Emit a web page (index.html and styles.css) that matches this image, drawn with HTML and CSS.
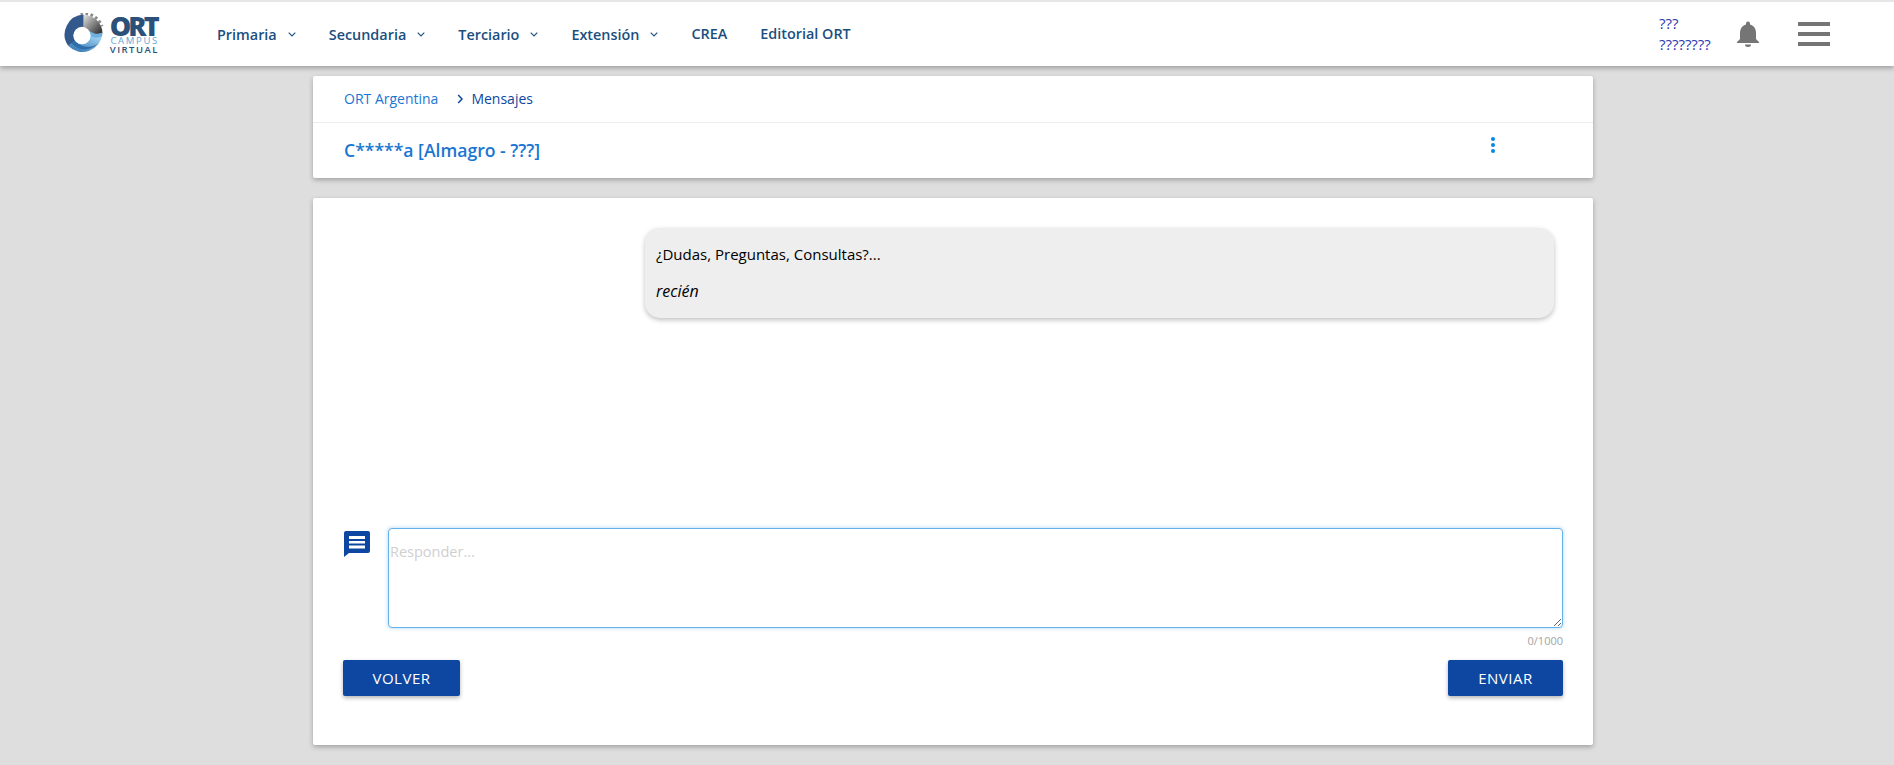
FILE: index.html
```html
<!DOCTYPE html>
<html lang="es">
<head>
  <meta charset="UTF-8" />
  <title>Mensajes - ORT Campus Virtual</title>
  <link rel="stylesheet" href="styles.css">
</head>
<body>

<header class="topbar">
  <a class="logo" href="#">
    <svg class="logo-mark" width="42" height="42" viewBox="0 1 41 41">
      <defs>
        <linearGradient id="ringGrey" x1="0.1" y1="0" x2="0.9" y2="0.8">
          <stop offset="0" stop-color="#d8d8d8"/>
          <stop offset="1" stop-color="#3a3a3a"/>
        </linearGradient>
        <linearGradient id="ringBlue" x1="0.8" y1="0.2" x2="0.2" y2="1">
          <stop offset="0" stop-color="#9accee"/>
          <stop offset="1" stop-color="#3478b4"/>
        </linearGradient>
      </defs>
      <!-- gear teeth on the upper right -->
      <path d="M18 1.500 A19.500 19.500 0 0 1 39 14" fill="none" stroke="#8a8a8a" stroke-width="3" stroke-dasharray="2.500 2.500"/>
      <path d="M21 3 A18 18 0 0 1 39.500 21 L21 23 Z" fill="url(#ringGrey)"/>
      <path d="M39.500 21 A19.500 19.500 0 0 1 6 33 L20 23 Z" fill="url(#ringBlue)"/>
      <path d="M6 33 A19.500 19.500 0 0 1 21 2.500 L21 23 Z" fill="#33598c"/>
      <path d="M9 30 C15 38 27 39 35 31 C28 36 18 35 13 27 Z" fill="#2f6ea8"/>
      <path d="M26 18 C32 22 36 22 39.500 20 L39 24 C34 26 30 25 26 23 Z" fill="#6fb0de"/>
      <circle cx="19.500" cy="23" r="8.500" fill="#fff"/>
    </svg>
    <span class="logo-text">
      <span class="logo-ort">ORT</span>
      <span class="logo-campus">CAMPUS</span>
      <span class="logo-virtual">VIRTUAL</span>
    </span>
  </a>

  <nav class="mainnav">
    <a href="#">Primaria <svg class="chev" width="8" height="5" viewBox="0 0 8 5"><path d="M.7.7 4 4 7.3.7" fill="none" stroke="#1b4f80" stroke-width="1.1"/></svg></a>
    <a href="#">Secundaria <svg class="chev" width="8" height="5" viewBox="0 0 8 5"><path d="M.7.7 4 4 7.3.7" fill="none" stroke="#1b4f80" stroke-width="1.1"/></svg></a>
    <a href="#">Terciario <svg class="chev" width="8" height="5" viewBox="0 0 8 5"><path d="M.7.7 4 4 7.3.7" fill="none" stroke="#1b4f80" stroke-width="1.1"/></svg></a>
    <a href="#">Extensión <svg class="chev" width="8" height="5" viewBox="0 0 8 5"><path d="M.7.7 4 4 7.3.7" fill="none" stroke="#1b4f80" stroke-width="1.1"/></svg></a>
    <a class="plain" href="#">CREA</a>
    <a class="plain" href="#">Editorial ORT</a>
  </nav>

  <div class="userbox">
    <a class="username" href="#">???<br>????????</a>
    <svg class="bell" width="24" height="26" viewBox="0 0 24 26">
      <path d="M12 0.5a2 2 0 0 1 2 2v1C18 4.500 20 8 20 12v6l3 3v1H1v-1l3-3v-6c0-4 2-7.500 6-8.500v-1a2 2 0 0 1 2-2zM9 23.500h6a3 2.500 0 0 1-6 0z" fill="#757575"/>
    </svg>
    <div class="burger"><span></span><span></span><span></span></div>
  </div>
</header>

<main class="page">
  <section class="card headcard">
    <div class="crumbs">
      <a href="#">ORT Argentina</a>
      <svg class="crumb-sep" width="7" height="10" viewBox="0 0 7 10"><path d="M1.200 1 5 5 1.200 9" fill="none" stroke="#0d47a1" stroke-width="1.500"/></svg>
      <span>Mensajes</span>
    </div>
    <div class="titlerow">
      <h1>C*****a [Almagro - ???]</h1>
      <div class="dots"><span></span><span></span><span></span></div>
    </div>
  </section>

  <section class="card chatcard">
    <div class="messages">
      <div class="bubble">
        <p>¿Dudas, Preguntas, Consultas?...</p>
        <p class="when">recién</p>
      </div>
    </div>

    <div class="reply">
      <svg class="reply-icon" width="28" height="27" viewBox="0 0 28 27">
        <path d="M3 1h22a2 2 0 0 1 2 2v18a2 2 0 0 1-2 2H6l-5 4V3a2 2 0 0 1 2-2z" fill="#0d47a1"/>
        <path d="M6 6h16v3H6zM6 11h16v2.500H6zM6 15.500h16v3H6z" fill="#fff"/>
      </svg>
      <div class="reply-field">
        <textarea placeholder="Responder..."></textarea>
        <div class="counter">0/1000</div>
      </div>
    </div>

    <div class="actions">
      <button class="btn-back" type="button">VOLVER</button>
      <button type="button">ENVIAR</button>
    </div>
  </section>
</main>

</body>
</html>
```

FILE: styles.css
```css
* { box-sizing: border-box; margin: 0; padding: 0; }

html, body {
  height: 765px;
  overflow: hidden;
}

body {
  font-family: 'Open Sans', sans-serif;
  background: #dedede;
  color: #000;
}

a {
  text-decoration: none;
}

.topbar {
  display: flex;
  align-items: center;
  height: 66px;
  padding-left: 62px;
  background: #fff;
  border-top: 2px solid #e6e6e6;
  box-shadow: 0 2px 5px rgba(0, 0, 0, 0.3);
}

.logo {
  display: flex;
  align-items: center;
  gap: 7px;
  width: 155px;
}

.logo-text {
  display: flex;
  flex-direction: column;
  align-items: flex-end;
  width: 48px;
}

.logo-ort {
  font-size: 27px;
  font-weight: 800;
  line-height: 21px;
  letter-spacing: -2.8px;
  margin-right: 2px;
  color: #2b5079;
}

.logo-campus,
.logo-virtual {
  font-size: 9.5px;
  line-height: 9px;
}

.logo-campus { color: #63a6d8; letter-spacing: 1.7px; }
.logo-virtual { color: #2b5079; font-weight: 600; letter-spacing: 1.5px; }

.mainnav {
  display: flex;
  align-items: center;
  gap: 33px;
}

.mainnav a {
  display: flex;
  align-items: center;
  gap: 11px;
  font-size: 14.4px;
  font-weight: 600;
  color: #1b4f80;
}

.mainnav a.plain {
  margin-top: -1px;
}

.chev {
  margin-top: 1px;
}

.userbox {
  display: flex;
  align-items: center;
  margin-left: auto;
  padding-right: 64px;
}

.username {
  width: 77px;
  font-size: 15px;
  line-height: 21px;
  color: #2c3ab0;
}

.bell {
  margin-right: 38px;
}

.burger {
  display: flex;
  flex-direction: column;
  gap: 6px;
  width: 32px;
}

.burger span {
  display: block;
  height: 4px;
  background: #757575;
}

.page {
  width: 1280px;
  margin: 10px 0 0 313px;
}

.card {
  background: #fff;
  border-radius: 2px;
  box-shadow: 0 2px 5px rgba(0, 0, 0, 0.28);
}

.headcard {
  height: 102px;
  margin-bottom: 20px;
}

.crumbs {
  display: flex;
  align-items: center;
  height: 47px;
  padding: 0 0 1px 31px;
  border-bottom: 1px solid #ececec;
  font-size: 14px;
}

.crumbs a {
  color: #1976d2;
}

.crumbs span {
  color: #0d47a1;
}

.crumb-sep {
  margin: 0 7px 0 19px;
}

.titlerow {
  display: flex;
  justify-content: space-between;
  padding: 15px 0 0 31px;
}

.titlerow h1 {
  font-size: 17.6px;
  font-weight: 600;
  line-height: 24px;
  color: #1976d2;
}

.dots {
  display: flex;
  flex-direction: column;
  gap: 2px;
  margin: -1px 98px 0 0;
}

.dots span {
  width: 4px;
  height: 4px;
  border-radius: 50%;
  background: #0288e8;
}

.chatcard {
  height: 547px;
  padding: 30px 30px 0;
}

.messages {
  display: flex;
  justify-content: flex-end;
  height: 300px;
}

.bubble {
  width: 909px;
  height: 90px;
  margin-right: 9px;
  padding: 16px 11px;
  background: #eee;
  border-radius: 15px;
  box-shadow: 0 2px 5px rgba(0, 0, 0, 0.25);
  font-size: 15px;
  line-height: 20px;
}

.when {
  margin-top: 17px;
  font-size: 16px;
  font-style: italic;
}

.reply {
  display: flex;
  gap: 17px;
}

.reply-icon {
  flex: none;
  margin: 2px 0 0 0;
  width: 28px;
}

.reply-field {
  flex: 1;
}

.reply-field textarea {
  display: block;
  width: 100%;
  height: 100px;
  padding: 13px 1px;
  border: 1px solid #64b0ea;
  border-radius: 4px;
  box-shadow: 0 0 4px rgba(100, 176, 234, 0.5);
  font-family: 'Open Sans', sans-serif;
  font-size: 14.5px;
  outline: none;
}

.reply-field textarea::placeholder {
  color: #cfcfcf;
}

.counter {
  margin-top: 6px;
  font-size: 11px;
  line-height: 14px;
  text-align: right;
  color: #a3a3a3;
}

.actions {
  display: flex;
  justify-content: space-between;
  margin-top: 12px;
}

.actions button {
  height: 36px;
  width: 115px;
  background: #0d47a1;
  color: #fff;
  border: none;
  border-radius: 2px;
  box-shadow: 0 2px 4px rgba(0, 0, 0, 0.3);
  font-family: 'Open Sans', sans-serif;
  font-size: 15px;
  font-weight: 500;
  letter-spacing: 0.5px;
  cursor: pointer;
}

.actions .btn-back {
  width: 117px;
}
```
